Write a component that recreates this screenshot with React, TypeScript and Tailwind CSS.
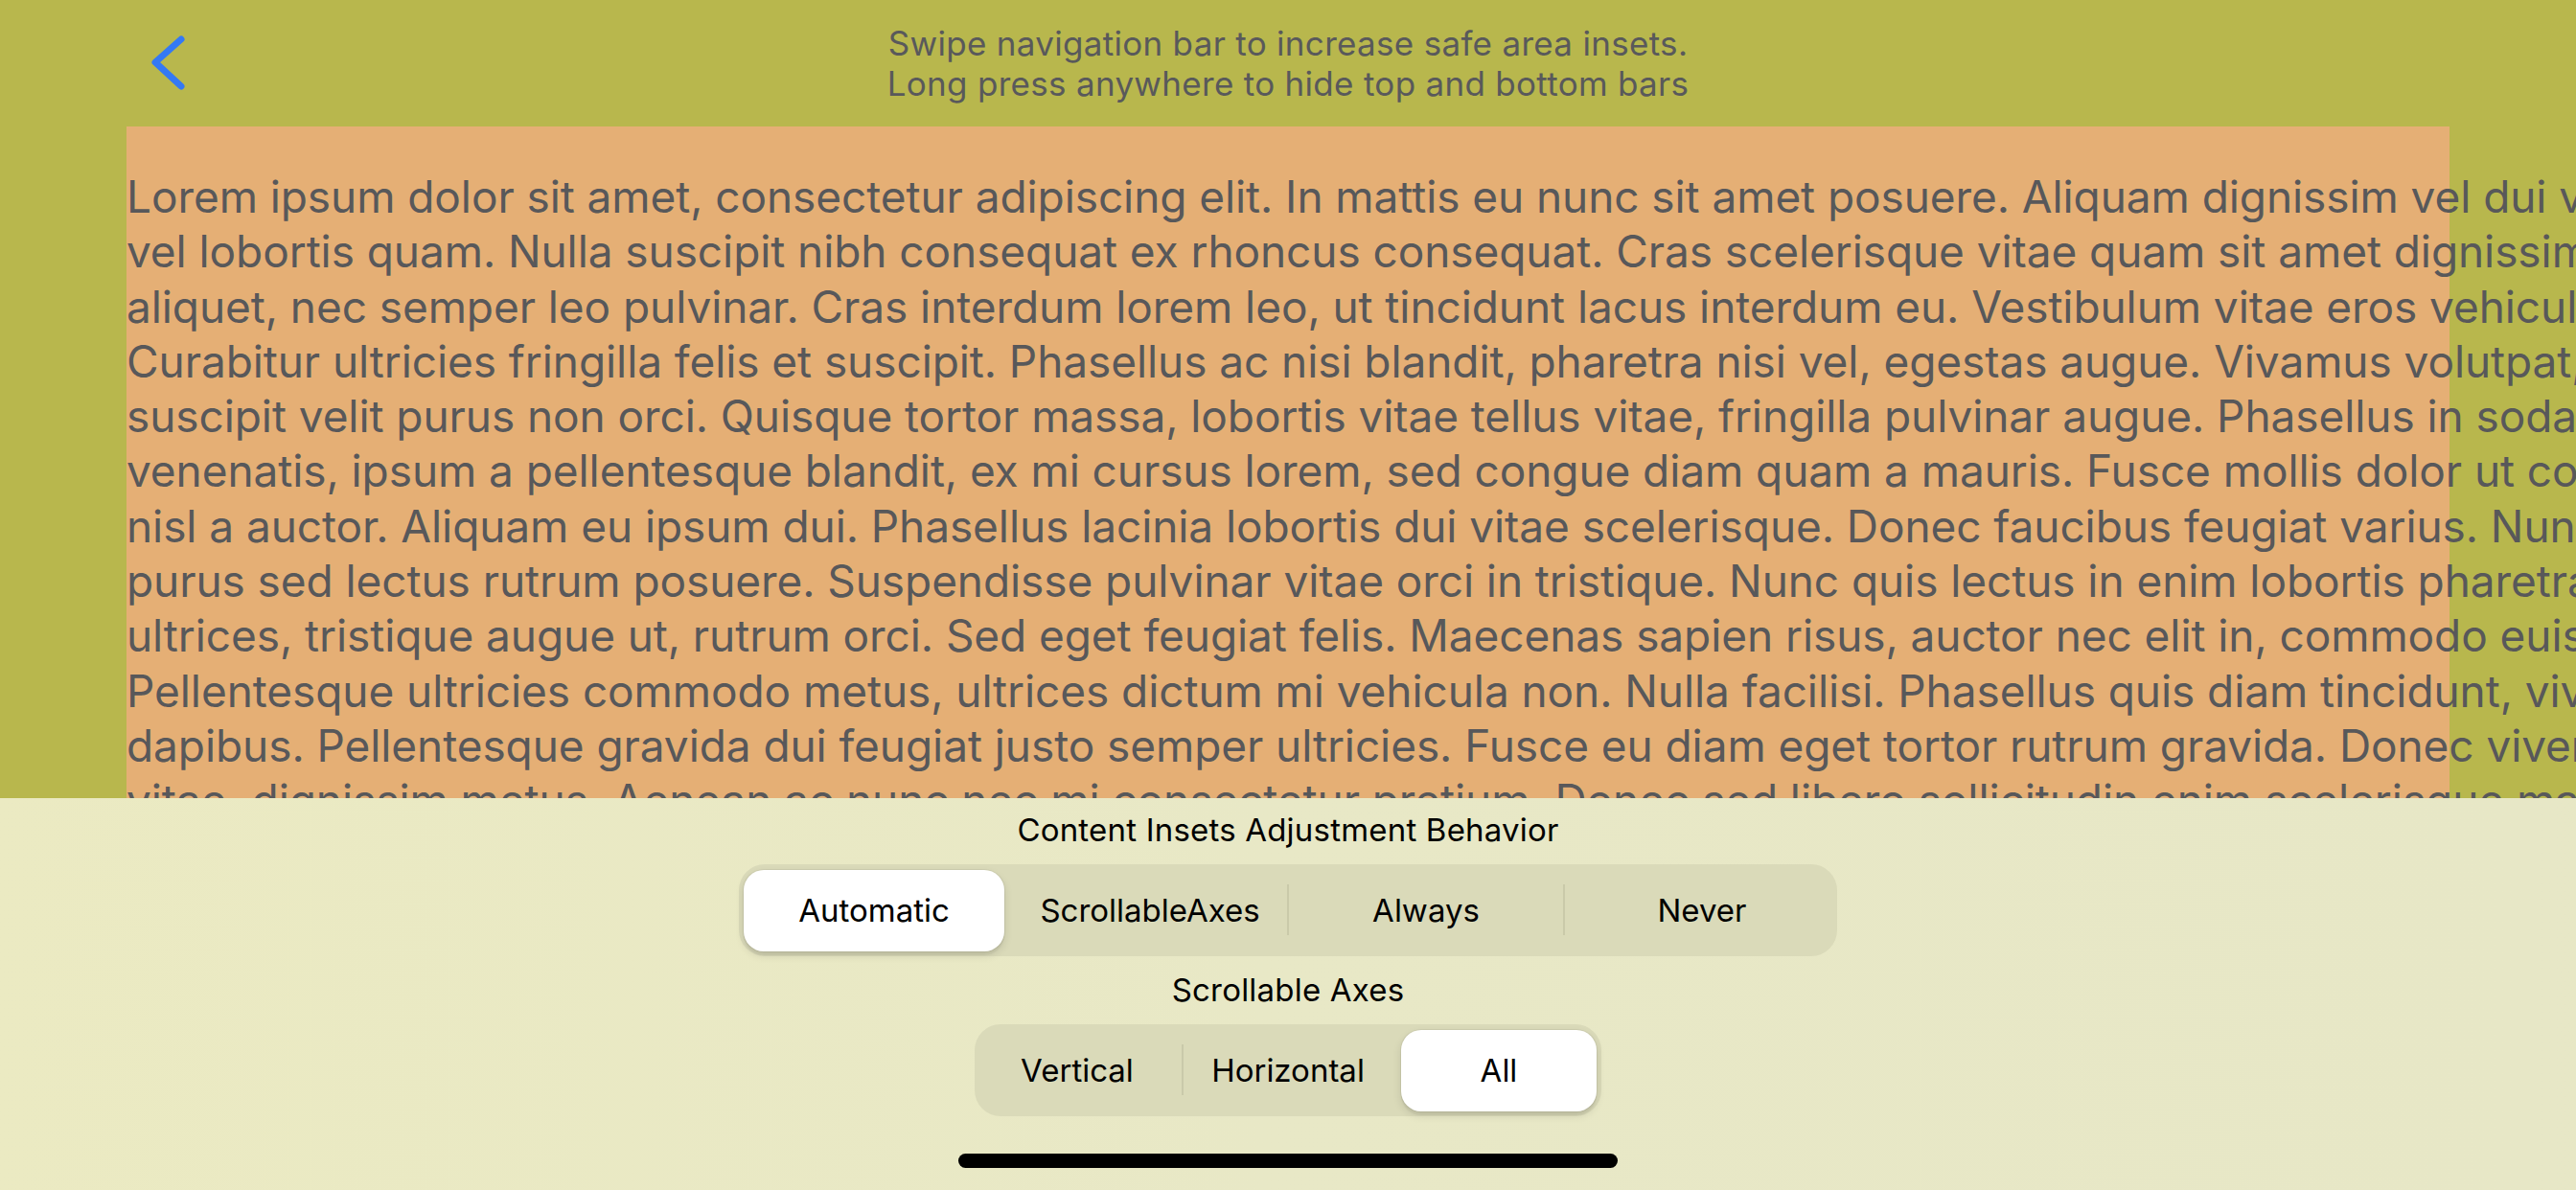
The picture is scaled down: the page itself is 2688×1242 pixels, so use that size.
import React from "react";

const lines = [
  "Lorem ipsum dolor sit amet, consectetur adipiscing elit. In mattis eu nunc sit amet posuere. Aliquam dignissim vel dui vitae lacinia. Sed",
  "vel lobortis quam. Nulla suscipit nibh consequat ex rhoncus consequat. Cras scelerisque vitae quam sit amet dignissim. Nam",
  "aliquet, nec semper leo pulvinar. Cras interdum lorem leo, ut tincidunt lacus interdum eu. Vestibulum vitae eros vehicula, feugiat",
  "Curabitur ultricies fringilla felis et suscipit. Phasellus ac nisi blandit, pharetra nisi vel, egestas augue. Vivamus volutpat, nulla",
  "suscipit velit purus non orci. Quisque tortor massa, lobortis vitae tellus vitae, fringilla pulvinar augue. Phasellus in sodales",
  "venenatis, ipsum a pellentesque blandit, ex mi cursus lorem, sed congue diam quam a mauris. Fusce mollis dolor ut convallis",
  "nisl a auctor. Aliquam eu ipsum dui. Phasellus lacinia lobortis dui vitae scelerisque. Donec faucibus feugiat varius. Nunc at",
  "purus sed lectus rutrum posuere. Suspendisse pulvinar vitae orci in tristique. Nunc quis lectus in enim lobortis pharetra. Nam",
  "ultrices, tristique augue ut, rutrum orci. Sed eget feugiat felis. Maecenas sapien risus, auctor nec elit in, commodo euismod",
  "Pellentesque ultricies commodo metus, ultrices dictum mi vehicula non. Nulla facilisi. Phasellus quis diam tincidunt, viverra",
  "dapibus. Pellentesque gravida dui feugiat justo semper ultricies. Fusce eu diam eget tortor rutrum gravida. Donec viverra nisl",
  "vitae, dignissim metus. Aenean ac nunc nec mi consectetur pretium. Donec sed libero sollicitudin enim scelerisque mattis. Sed",
  "at lorem non magna tincidunt commodo. Integer eget sem in justo tempor ultricies. Nullam vel ante nec dui.",
];

function Segmented({
  items,
  selected,
  width,
}: {
  items: string[];
  selected: number;
  width: string;
}) {
  return (
    <div className={`h-[96px] ${width} rounded-[27px] bg-[#dadab9]`}>
      <div className="mx-[-3px] flex h-full">
        {items.map((it, i) => {
          const isSel = i === selected;
          const showSep = i > 0 && i !== selected && i - 1 !== selected;
          return (
            <div
              key={it}
              className="relative flex flex-1 items-center justify-center"
            >
              {i > 0 && (
                <div
                  className={`absolute left-[-1px] top-[21px] h-[53px] w-[2px] ${
                    showSep ? "bg-[#c9c9aa]" : "bg-transparent"
                  }`}
                />
              )}
              {isSel && (
                <div className="absolute inset-x-[8px] bottom-[5px] top-[6px] rounded-[21px] bg-white shadow-[0_4px_10px_rgba(0,0,0,0.12),0_4px_1px_rgba(0,0,0,0.04)] ring-1 ring-black/5" />
              )}
              <span className="relative text-[33px] leading-[40px] text-black">
                {it}
              </span>
            </div>
          );
        })}
      </div>
    </div>
  );
}

export default function App() {
  return (
    <div
      className="relative h-[1242px] w-[2688px] overflow-hidden bg-[#b8b74d]"
      style={{ fontFamily: "Inter, 'Noto Sans', sans-serif" }}
    >
      {/* nav bar */}
      <div className="relative h-[132px] w-full">
        <svg
          className="absolute left-[150px] top-[30px]"
          width="50"
          height="72"
          viewBox="0 0 50 72"
          fill="none"
        >
          <path
            d="M39 11 L12 35 L39 60"
            stroke="#3479f4"
            strokeWidth="7"
            strokeLinecap="round"
            strokeLinejoin="round"
          />
        </svg>
        <div className="flex flex-col items-center pt-[24px] text-[35px] leading-[42px] tracking-[0.3px] text-[#59595b]">
          <div>Swipe navigation bar to increase safe area insets.</div>
          <div>Long press anywhere to hide top and bottom bars</div>
        </div>
      </div>

      {/* scroll content */}
      <div className="relative ml-[132px] h-[1110px] w-[2424px] bg-[#e5af75]">
        <div className="pt-[45px] text-[46px] leading-[57.3px] tracking-[-0.08px] text-[#58585a]">
          {lines.map((l, i) => (
            <div key={i} className="whitespace-nowrap">
              {l}
            </div>
          ))}
        </div>
      </div>

      {/* bottom panel */}
      <div className="absolute bottom-0 left-0 right-0 flex h-[409px] flex-col items-center bg-gradient-to-r from-[#ebeac2] via-[#e8e8c6] to-[#e7e7c6] pt-[13px]">
        <div className="text-[33px] leading-[40px] tracking-[0.2px] text-black">
          Content Insets Adjustment Behavior
        </div>
        <div className="mt-[16px]">
          <Segmented
            items={["Automatic", "ScrollableAxes", "Always", "Never"]}
            selected={0}
            width="w-[1146px]"
          />
        </div>
        <div className="mt-[15px] text-[33px] leading-[40px] tracking-[0.2px] text-black">
          Scrollable Axes
        </div>
        <div className="mt-[16px]">
          <Segmented
            items={["Vertical", "Horizontal", "All"]}
            selected={2}
            width="w-[654px]"
          />
        </div>
        <div className="mt-[39px] h-[15px] w-[688px] rounded-full bg-black" />
      </div>
    </div>
  );
}
